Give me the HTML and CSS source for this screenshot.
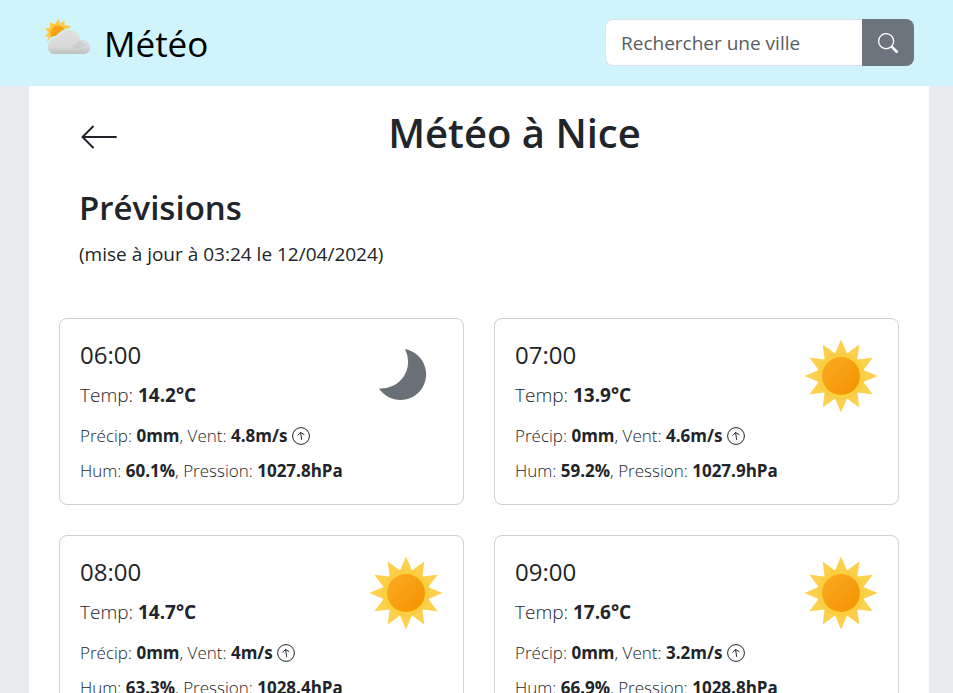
FILE: index.html
```html
<!DOCTYPE html>
<html lang="fr">
<head>
<meta charset="utf-8">
<meta name="viewport" content="width=device-width, initial-scale=1">
<title>Météo à Nice</title>
<link rel="stylesheet" href="styles.css">
</head>
<body>
<svg class="sprites" aria-hidden="true">
  <defs>
    <linearGradient id="disc" x1="0" y1="0" x2="1" y2="1">
      <stop offset="0" stop-color="#fbab24"/>
      <stop offset="1" stop-color="#f39200"/>
    </linearGradient>
    <linearGradient id="rays" x1="0" y1="0" x2="0" y2="1">
      <stop offset="0" stop-color="#ffd04a"/>
      <stop offset="1" stop-color="#fdd04e"/>
    </linearGradient>
    <linearGradient id="cloud-fill" x1="0" y1="0" x2="0" y2="1">
      <stop offset="0" stop-color="#e0e0e0"/>
      <stop offset="0.7" stop-color="#d8d8d8"/>
      <stop offset="1" stop-color="#bebebe"/>
    </linearGradient>
    <symbol id="sun" viewBox="-40 -40 80 80">
      <path fill="url(#rays)" d="M0-36.5 6-22.4 18.3-31.6 16.4-16.4 31.6-18.3 22.4-6 36.5 0 22.4 6 31.6 18.3 16.4 16.4 18.3 31.6 6 22.4 0 36.5-6 22.4-18.3 31.6-16.4 16.4-31.6 18.3-22.4 6-36.5 0-22.4-6-31.6-18.3-16.4-16.4-18.3-31.6-6-22.4Z"/>
      <circle r="23.5" fill="#eec043" opacity=".35"/>
      <circle r="22.3" fill="#fad03c"/>
      <circle r="19" fill="url(#disc)"/>
    </symbol>
    <symbol id="moon" viewBox="-40 -40 80 80">
      <path fill="#6a7078" d="M-1-27A25.700 25.700 0 1 1-27 12.500A27 27 0 0 0-1-27Z"/>
    </symbol>
    <symbol id="wind" viewBox="0 0 18 18">
      <circle cx="9" cy="9" r="8.400" fill="none" stroke="#212529" stroke-width="1"/>
      <path d="M9.600 12.500 8.600 5.500M5.800 8.300 8.600 5.500 12 7.500" fill="none" stroke="#212529" stroke-width="1" stroke-linecap="round" stroke-linejoin="round"/>
    </symbol>
  </defs>
</svg>

<header class="topbar">
  <a class="brand" href="#">
    <svg class="brand-logo" viewBox="0 0 48 40" aria-hidden="true">
      <path fill="#fccb45" d="M14.500 0 16.500 4.500 20.500 1.400 20.600 6 27 7.500 22 12 9 19 2.500 22.500 5 18 .8 17 4.500 13.500 1 9.500 6 8.600 6 3.600 11 5.200Z"/>
      <circle cx="14" cy="14" r="8.600" fill="#fad03c"/>
      <circle cx="14" cy="14" r="7.600" fill="url(#disc)"/>
      <path fill="#cff4fc" d="M4 26C3 22 6 17.500 12 16.800C15.500 13.500 19 9.500 24 9.500L30 14V26H6Z"/>
      <path fill="url(#cloud-fill)" d="M10.500 35C6.500 35 4 32.500 4 28.500C4 23.500 7 19 13.500 18.300C15.500 13.800 19 11 24.500 11C31 11 35.500 15 36.300 20.800C42.500 21 46.200 24 46.200 28.500C46.200 32.500 43.500 35 39 35Z"/>
      <path d="M27 27Q33 26 36.300 21Q38 25 42 26Q38 30 33 29Q30 28 27 27Z" fill="#c2c2c2" opacity=".5"/>
    </svg>
    <span class="brand-name">Météo</span>
  </a>
  <form class="search" role="search">
    <input class="search-input" type="search" placeholder="Rechercher une ville" aria-label="Rechercher une ville">
    <button class="search-button" type="submit" aria-label="Rechercher">
      <svg viewBox="0 0 16 16" fill="currentColor" aria-hidden="true"><path d="M11.742 10.344a6.500 6.500 0 1 0-1.397 1.398h-.001c.03.04.062.078.098.115l3.850 3.850a1 1 0 0 0 1.415-1.414l-3.850-3.850a1.007 1.007 0 0 0-.115-.1zM12 6.500a5.500 5.500 0 1 1-11 0 5.500 5.500 0 0 1 11 0z"/></svg>
    </button>
  </form>
</header>

<main class="page">
  <div class="title-row">
    <a class="back" href="#" aria-label="Retour">
      <svg viewBox="0 0 38 24" fill="none" stroke="currentColor" stroke-width="2" stroke-linecap="round" stroke-linejoin="round" aria-hidden="true"><path d="M14 1.500 3.500 12 14 22.500M3.500 12H37"/></svg>
    </a>
    <h1>Météo à Nice</h1>
  </div>
  <section>
    <div class="intro">
      <h2>Prévisions</h2>
      <p>(mise à jour à 03:24 le 12/04/2024)</p>
    </div>
    <div class="cards">
      <article class="card">
        <div class="card-top">
          <div><h3>06:00</h3><p class="temp">Temp: <b>14.2°C</b></p></div>
          <svg class="weather" role="img" aria-label="Nuit claire"><use href="#moon"/></svg>
        </div>
        <p>Précip: <b>0mm</b>, Vent: <b>4.8m/s</b> <svg class="wind" aria-hidden="true"><use href="#wind"/></svg></p>
        <p>Hum: <b>60.1%</b>, Pression: <b>1027.8hPa</b></p>
      </article>
      <article class="card">
        <div class="card-top">
          <div><h3>07:00</h3><p class="temp">Temp: <b>13.9°C</b></p></div>
          <svg class="weather" role="img" aria-label="Ensoleillé"><use href="#sun"/></svg>
        </div>
        <p>Précip: <b>0mm</b>, Vent: <b>4.6m/s</b> <svg class="wind" aria-hidden="true"><use href="#wind"/></svg></p>
        <p>Hum: <b>59.2%</b>, Pression: <b>1027.9hPa</b></p>
      </article>
      <article class="card">
        <div class="card-top">
          <div><h3>08:00</h3><p class="temp">Temp: <b>14.7°C</b></p></div>
          <svg class="weather" role="img" aria-label="Ensoleillé"><use href="#sun"/></svg>
        </div>
        <p>Précip: <b>0mm</b>, Vent: <b>4m/s</b> <svg class="wind" aria-hidden="true"><use href="#wind"/></svg></p>
        <p>Hum: <b>63.3%</b>, Pression: <b>1028.4hPa</b></p>
      </article>
      <article class="card">
        <div class="card-top">
          <div><h3>09:00</h3><p class="temp">Temp: <b>17.6°C</b></p></div>
          <svg class="weather" role="img" aria-label="Ensoleillé"><use href="#sun"/></svg>
        </div>
        <p>Précip: <b>0mm</b>, Vent: <b>3.2m/s</b> <svg class="wind" aria-hidden="true"><use href="#wind"/></svg></p>
        <p>Hum: <b>66.9%</b>, Pression: <b>1028.8hPa</b></p>
      </article>
    </div>
  </section>
</main>
</body>
</html>
```
FILE: styles.css
```css
* { box-sizing: border-box; }

body {
  margin: 0;
  background: #e9ecef;
  color: #212529;
  font-family: "Segoe UI", "Open Sans", "Noto Sans", sans-serif;
  font-size: 19px;
  line-height: 30px;
}

h1, h2, h3, p { margin: 0; }
a { color: inherit; text-decoration: none; }
b { font-weight: 700; }
svg { display: block; }

.sprites { position: absolute; width: 0; height: 0; }

.topbar {
  display: flex;
  align-items: center;
  justify-content: space-between;
  min-height: 86px;
  padding: 0 39px 1px 44px;
  background: #cff4fc;
}

.brand { display: flex; align-items: center; gap: 12px; color: #000; }
.brand-logo { width: 48px; height: 40px; margin-bottom: 8px; }
.brand-name { padding-top: 3px; font-size: 35px; line-height: 50px; }

.search { display: flex; width: 309px; height: 47px; }

.search-input {
  flex: 1;
  min-width: 0;
  padding: 0 15px;
  border: 1px solid #dee2e6;
  border-right: 0;
  border-radius: 8px 0 0 8px;
  background: #fff;
  color: #212529;
  font: inherit;
  appearance: none;
}
.search-input::placeholder { color: #595c5f; opacity: 1; }

.search-button {
  display: grid;
  place-items: center;
  width: 52px;
  padding: 0;
  border: 0;
  border-radius: 0 8px 8px 0;
  background: #6c757d;
  color: #fff;
}
.search-button svg { width: 20px; height: 20px; }

.page {
  margin: 0 24px 0 29px;
  padding: 19px 30px 30px;
  background: #fff;
}

.title-row { display: flex; align-items: center; padding-left: 20px; }
.back { width: 51px; padding-top: 8px; }
.back svg { width: 38px; height: 24px; }

h1 {
  flex: 1;
  font-size: 40px;
  font-weight: 600;
  line-height: 56px;
  text-align: center;
}

.intro { padding: 25px 20px 49px; }
h2 { margin-bottom: 9px; font-size: 33px; font-weight: 600; line-height: 44px; }

.cards {
  display: grid;
  grid-template-columns: 1fr 1fr;
  gap: 30px;
}

.card {
  padding: 21px 20px 20px;
  border: 1px solid #ced0d2;
  border-radius: 8px;
  font-size: 17px;
  font-weight: 300;
  line-height: 27px;
}
.card p + p { margin-top: 8px; }

.card-top { display: flex; justify-content: space-between; margin-bottom: 6px; }
h3 { margin-bottom: 10px; font-size: 24px; font-weight: 500; line-height: 30px; }
.temp { font-size: 19px; line-height: 30px; }
.weather { width: 80px; height: 80px; margin: -4px -3px 0 0; }
.wind { display: inline-block; width: 18px; height: 18px; vertical-align: -3px; }
```
